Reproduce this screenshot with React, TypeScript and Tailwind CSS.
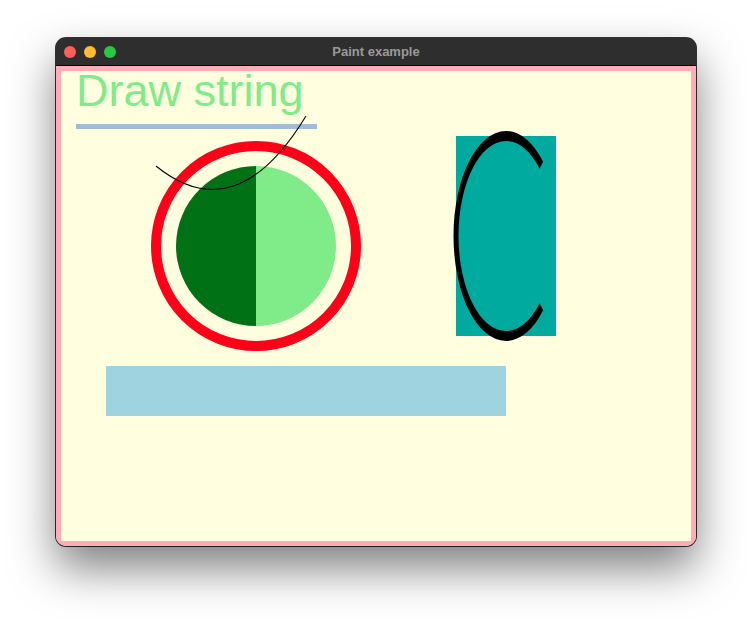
export default function App() {
  return (
    <div className="w-[752px] h-[620px] bg-white pl-[56px] pt-[38px]">
      <div className="w-[640px] rounded-[10px] overflow-hidden ring-1 ring-black/80 shadow-[0_22px_45px_rgba(0,0,0,0.5)] bg-[#2e2e2e]">
        {/* title bar */}
        <div className="relative h-[28px] flex items-center pl-[8px] gap-[8px] border-b border-black">
          <span className="w-[12px] h-[12px] rounded-full bg-[#fe5f57]" />
          <span className="w-[12px] h-[12px] rounded-full bg-[#febc2e]" />
          <span className="w-[12px] h-[12px] rounded-full bg-[#28c840]" />
          <div className="absolute inset-0 flex items-center justify-center text-[13px] font-bold text-[#9a9a9a] font-['Liberation_Sans',Arial,sans-serif]">
            Paint example
          </div>
        </div>
        {/* canvas */}
        <svg width="640" height="480" viewBox="0 0 640 480" className="block bg-[#ffffe0]">
          <rect x="0" y="0" width="640" height="480" fill="none" stroke="#ffacb4" strokeWidth="10" />
          <text
            x="20"
            y="40"
            fill="#80ec89"
            fontSize="45"
            fontFamily="'Liberation Sans', Arial, sans-serif"
          >
            Draw string
          </text>
          <rect x="20" y="58" width="241" height="5" fill="#a2bcd8" />
          <circle cx="200" cy="180" r="100" fill="none" stroke="#ff0019" strokeWidth="10" />
          <path d="M200 100 A80 80 0 0 0 200 260 Z" fill="#007215" />
          <path d="M200 100 A80 80 0 0 1 200 260 Z" fill="#80ec89" />
          <path d="M100 100 Q180 165 250 50" fill="none" stroke="#000" strokeWidth="1.1" />
          <rect x="400" y="70" width="100" height="200" fill="#00aa9f" />
          <g transform="translate(450 170) scale(0.5 1)">
            <path d="M70.71 -70.71 A100 100 0 1 0 70.71 70.71" fill="none" stroke="#000" strokeWidth="10" />
          </g>
          <rect x="50" y="300" width="400" height="50" fill="#9fd3e0" />
        </svg>
      </div>
    </div>
  )
}
